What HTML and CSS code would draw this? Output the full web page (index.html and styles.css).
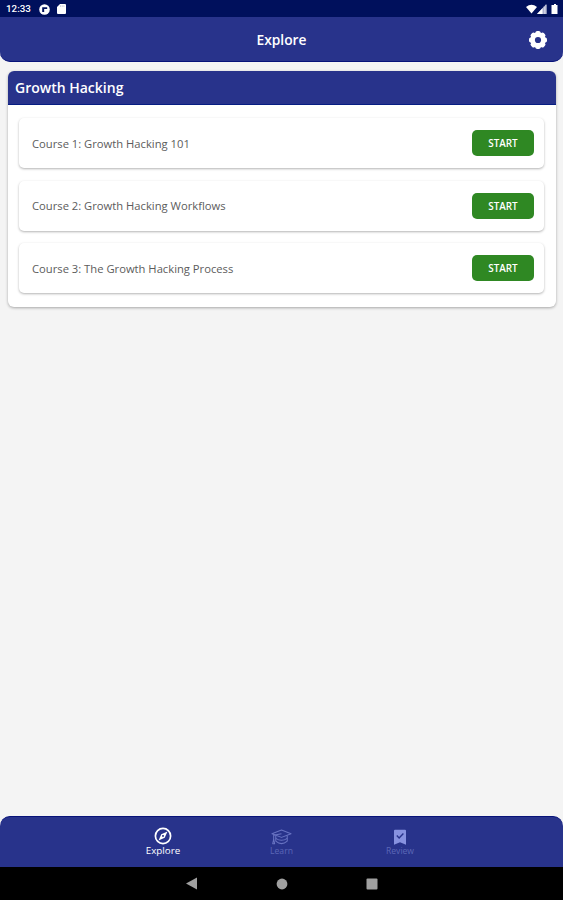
FILE: index.html
```html
<!DOCTYPE html>
<html lang="en">
<head>
<meta charset="utf-8">
<title>Explore</title>
<link rel="stylesheet" href="styles.css">
</head>
<body>
<div class="status">
  <span class="time">12:33</span>
  <svg class="ico-app" width="11" height="11" viewBox="0 0 11 11"><circle cx="5.5" cy="5.5" r="5.3" fill="#fff"/><path d="M3.2 8V3.2H8.2V5H5.2V8z" fill="#00105c"/><path d="M5.6 5.4h1.8v1H5.6z" fill="#fff"/></svg>
  <svg class="ico-sd" width="9" height="10" viewBox="0 0 9 10"><path d="M3 0H8Q9 0 9 1V9Q9 10 8 10H1Q0 10 0 9V3z" fill="#fff"/><path d="M3.5 1.4v1.4M5.2 1.4v1.4M6.9 1.4v1.4" stroke="#a9aecb" stroke-width=".7"/></svg>
  <svg class="ico-sys" width="32" height="11" viewBox="0 0 32 11"><path d="M0 3Q5.5-1.6 11 3L5.5 9.6z" fill="#fff"/><path d="M20.3 0V10H11z" fill="#9298c0"/><path d="M16.6 4V10H11z" fill="#fff"/><path d="M18.2 2.5V10M20 .8V10" stroke="#fff" stroke-width=".8"/><path d="M26.5 1H28V0H30V1H31.5V10H25.5V1z" fill="#fff"/></svg>
</div>
<header class="appbar">
  <h1>Explore</h1>
  <svg class="gear" width="18" height="18" viewBox="0 0 18 18"><g fill="#fff"><circle cx="9" cy="9" r="7.8"/><g id="t"><rect x="6.4" y="0" width="5.2" height="18" rx="1.8"/><rect x="0" y="6.4" width="18" height="5.2" rx="1.8"/></g><use href="#t" transform="rotate(45 9 9)"/></g><circle cx="9" cy="9" r="3.1" fill="#28338b"/></svg>
</header>
<main>
  <section class="card">
    <h2>Growth Hacking</h2>
    <div class="list">
      <div class="row"><span>Course 1: Growth Hacking 101</span><button>START</button></div>
      <div class="row"><span>Course 2: Growth Hacking Workflows</span><button>START</button></div>
      <div class="row"><span>Course 3: The Growth Hacking Process</span><button>START</button></div>
    </div>
  </section>
</main>
<nav class="tabs">
  <div class="tab active">
    <svg width="20" height="18" viewBox="0 0 20 18"><circle cx="10" cy="9" r="7.6" fill="none" stroke="#fff" stroke-width="1.7"/><path fill-rule="evenodd" d="M14.5 4.5L11.7 10.7L5.5 13.5L8.3 7.3zM10 8.1a.9.9 0 1 0 .01 0z" fill="#fff"/></svg>
    <span>Explore</span>
  </div>
  <div class="tab">
    <svg class="cap" width="21" height="18" viewBox="0 0 22 18"><g fill="none" stroke="#6873c2" stroke-width="1.1" stroke-linejoin="round"><path d="M1 5.5L11 1.6L21 5.5L11 9.4z"/><path d="M5 7.4V13.3Q11 18.5 17 13.3V7.4"/><path d="M5 10.4Q11 14.5 17 10.4"/><path d="M11 5.5L2.8 7.2V12"/><path d="M2.8 11.5L1.8 16H3.8z"/></g></svg>
    <span>Learn</span>
  </div>
  <div class="tab">
    <svg class="mark" width="12" height="18" viewBox="0 0 12 18"><path d="M1 1.8H11Q12 1.8 12 2.8V16.8L6 14.2L0 16.8V2.8Q0 1.8 1 1.8z" fill="#8792e0"/><path d="M2.8 7.6L5.1 9.9L9.4 5.5" fill="none" stroke="#28338b" stroke-width="1.4"/></svg>
    <span>Review</span>
  </div>
</nav>
<div class="sysnav">
  <svg width="12" height="13" viewBox="0 0 12 13"><path d="M0 6.5L11 .5V12.5z" fill="#a0a0a0"/></svg>
  <svg width="12" height="12" viewBox="0 0 12 12"><circle cx="6" cy="6" r="5.4" fill="#a0a0a0"/></svg>
  <svg width="12" height="12" viewBox="0 0 12 12"><rect x=".5" y=".5" width="11" height="11" rx="1" fill="#a0a0a0"/></svg>
</div>
</body>
</html>
```
FILE: styles.css
```css
* { box-sizing: border-box; }
body {
  margin: 0;
  height: 900px;
  display: flex;
  flex-direction: column;
  background: #f4f4f4;
  font-family: "Open Sans", "Noto Sans", sans-serif;
  overflow: hidden;
}
svg { display: block; flex: none; }
.status {
  height: 17px;
  display: flex;
  align-items: center;
  background: #00105c;
  color: #fff;
  padding: 1px 5px 0 6px;
}
.time { font: 500 9.8px/16px Roboto, sans-serif; width: 33px; }
.ico-sd { margin-left: 7px; }
.ico-sys { margin-left: auto; }
.appbar {
  height: 45px;
  display: grid;
  grid-template-columns: 1fr auto 1fr;
  align-items: center;
  padding: 2px 16px 0;
  background: #28338b;
  border-bottom: 1px solid #071279;
  border-radius: 0 0 10px 10px;
}
h1 {
  grid-column: 2;
  margin: 0;
  color: #fff;
  font-size: 13.8px;
  line-height: 18px;
  font-weight: 600;
}
.gear { justify-self: end; }
main { flex: 1; padding: 9px 7px 0 8px; }
.card {
  height: 236px;
  border-radius: 6px;
  background: #fff;
  box-shadow: 0 1px 3px rgba(0, 0, 0, .32);
  overflow: hidden;
}
h2 {
  margin: 0;
  height: 34px;
  padding-left: 7px;
  background: #28338b;
  border-bottom: 1px solid #071d82;
  color: #fff;
  font-size: 14px;
  line-height: 34px;
  font-weight: 600;
}
.list {
  display: flex;
  flex-direction: column;
  gap: 12.5px;
  padding: 13px 12px 0 11px;
}
.row {
  height: 50px;
  display: flex;
  align-items: center;
  justify-content: space-between;
  padding: 0 10px 0 13px;
  border-radius: 5px;
  background: #fff;
  box-shadow: 0 1px 2.5px rgba(0, 0, 0, .3);
  color: #5c5c5c;
  font-size: 11.22px;
}
button {
  width: 62px;
  height: 26px;
  padding: 0;
  border: 0;
  border-radius: 5px;
  background: #2f8823;
  color: #fff;
  font: 600 9.9px/27px "Open Sans", sans-serif;
}
.tabs {
  height: 51px;
  display: flex;
  justify-content: center;
  background: #28338b;
  border-top: 1px solid #071279;
  border-radius: 10px 10px 0 0;
}
.tab {
  width: 118.5px;
  padding-top: 11px;
  display: flex;
  flex-direction: column;
  align-items: center;
  color: #5c67b7;
  font-size: 8.6px;
  line-height: 13px;
}
.tab span { margin-top: -1px; }
.tab.active { padding-top: 10px; color: #fff; font-size: 9.8px; }
.sysnav {
  height: 33px;
  display: flex;
  justify-content: center;
  align-items: center;
  gap: 78px;
  background: #000;
}
```
